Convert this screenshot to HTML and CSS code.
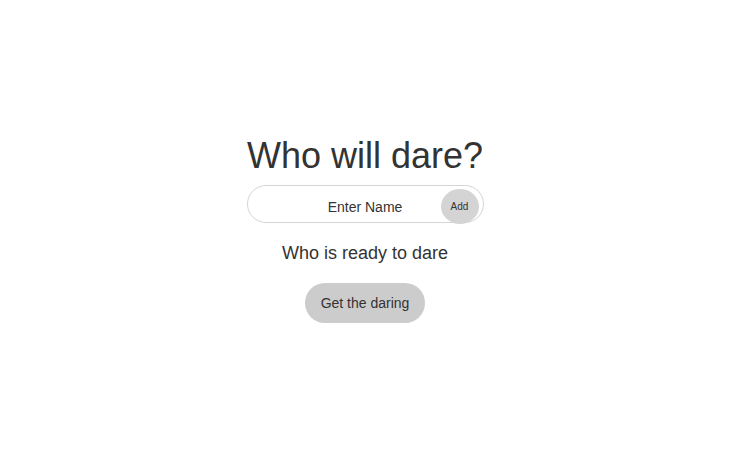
FILE: index.html
```html
<!DOCTYPE html>
<html>
<head>
<meta charset="utf-8">
<link rel="stylesheet" href="styles.css">
</head>
<body>
<main class="app">
  <h1 class="title">Who will dare?</h1>
  <div class="entry">
    <input class="name-input" type="text" placeholder="Enter Name">
    <button class="add-btn">Add</button>
  </div>
  <p class="subtitle">Who is ready to dare</p>
  <button class="dare-btn">Get the daring</button>
</main>
</body>
</html>
```
FILE: styles.css
```css
html, body {
  margin: 0;
  padding: 0;
  height: 100%;
  background: #fff;
  font-family: "Liberation Sans", Arial, sans-serif;
  color: #333;
}
.app {
  height: 100%;
  display: flex;
  flex-direction: column;
  align-items: center;
  justify-content: flex-start;
  padding: 135px 20px 0 0;
  box-sizing: border-box;
}
.title {
  margin: 0;
  font-size: 36px;
  font-weight: normal;
  line-height: 42px;
  color: #333;
}
.entry {
  margin-top: 8px;
  position: relative;
  width: 237px;
  height: 38px;
}
.name-input {
  width: 100%;
  height: 100%;
  box-sizing: border-box;
  border: 1px solid #d6d6d6;
  border-radius: 19px;
  outline: none;
  background: transparent;
  text-align: center;
  font-family: inherit;
  font-size: 14px;
  color: #333;
  padding: 5px 0 0;
}
.name-input::placeholder {
  color: #333;
}
.add-btn {
  position: absolute;
  left: 194px;
  top: 4px;
  width: 38px;
  height: 35px;
  border: none;
  border-radius: 50%;
  background: #d4d4d4;
  font-family: inherit;
  font-size: 10px;
  color: #333;
  padding: 0;
}
.subtitle {
  margin: 19px 0 0;
  font-size: 18px;
  line-height: 22px;
}
.dare-btn {
  margin-top: 19px;
  width: 120px;
  height: 40px;
  border: none;
  border-radius: 20px;
  background: #cccccc;
  font-family: inherit;
  font-size: 14px;
  color: #333;
  padding: 0;
}
```
